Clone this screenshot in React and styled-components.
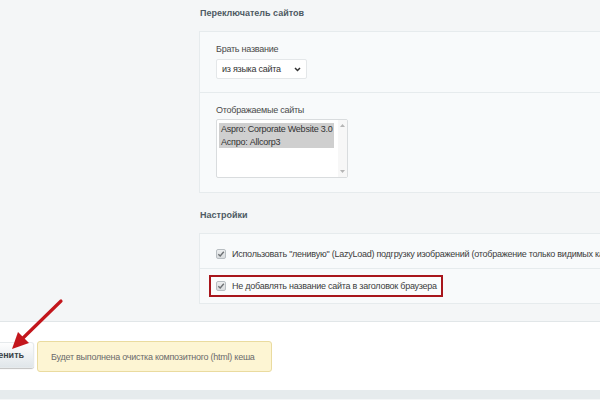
import styled, { createGlobalStyle } from 'styled-components';

const GlobalStyle = createGlobalStyle`
  html, body {
    margin: 0;
    padding: 0;
    overflow: hidden;
  }
  body {
    font-family: "Liberation Sans", Arial, sans-serif;
    font-size: 9px;
    letter-spacing: -0.25px;
    color: #333;
  }
`;

const Page = styled.div`
  position: relative;
  width: 600px;
  height: 400px;
  overflow: hidden;
  background: #f4f6f7;
`;

const Main = styled.div`
  height: 322px;
  padding-left: 199px;
  border-bottom: 1px solid #e1e6e8;
  box-sizing: border-box;
`;

const SectionTitle = styled.div`
  height: 26px;
  line-height: 26px;
  padding-left: 1px;
  margin-top: ${(p) => p.$top || 0}px;
  margin-bottom: 5px;
  font-weight: bold;
  font-size: 9px;
  letter-spacing: 0;
  color: #4e5a63;
`;

const Card = styled.div`
  width: 520px;
  background: #f8fafb;
  border: 1px solid #e6ebed;
  border-right: none;
`;

const Field = styled.div`
  padding: 11px 16px ${(p) => p.$bottom}px;
  border-bottom: ${(p) => (p.$last ? 'none' : '1px solid #e6ebed')};
`;

const Label = styled.div`
  height: 12px;
  line-height: 12px;
  margin-bottom: ${(p) => p.$gap}px;
  color: #4a4a4a;
`;

const Select = styled.div`
  display: flex;
  align-items: center;
  justify-content: space-between;
  width: 91px;
  height: 20px;
  box-sizing: border-box;
  padding: 0 5px 0 5px;
  background: #fff;
  border: 1px solid #e4e7e9;
  border-radius: 2px;
  color: #333;
`;

const ListBox = styled.div`
  display: flex;
  width: 132px;
  height: 59px;
  box-sizing: border-box;
  background: #fff;
  border: 1px solid #d9dcde;
  border-radius: 2px;
`;

const Options = styled.div`
  flex: 1;
  padding: 3px 4px 0 2px;
`;

const Option = styled.div`
  height: 12.5px;
  line-height: 12.5px;
  padding-left: 2px;
  background: ${(p) => (p.$selected ? '#cfcfcf' : 'transparent')};
  color: #333;
  white-space: nowrap;
`;

const ScrollBar = styled.div`
  width: 9px;
  display: flex;
  flex-direction: column;
  justify-content: space-between;
  align-items: center;
  padding: 4px 0;
  background: #f7f7f7;
`;

const Row = styled.div`
  display: flex;
  align-items: center;
  height: ${(p) => p.$h}px;
  box-sizing: border-box;
  padding: ${(p) => p.$pad};
  border-bottom: ${(p) => (p.$last ? 'none' : '1px solid #e6ebed')};
`;

const Highlight = styled.div`
  display: flex;
  align-items: center;
  height: 22px;
  box-sizing: border-box;
  padding: 0 4px 0 5px;
  border: 2px solid #a8161c;
  background: #fbfcfc;
`;

const CheckText = styled.span`
  margin-left: 6px;
  color: #3c3c3c;
  white-space: nowrap;
`;

const Box = styled.span`
  display: inline-flex;
  flex-shrink: 0;
  align-items: center;
  justify-content: center;
  width: 10px;
  height: 10px;
  box-sizing: border-box;
  border: 1px solid #b8bec2;
  border-radius: 2px;
  background: linear-gradient(#eceeef, #d9dcde);
`;

const Footer = styled.div`
  display: flex;
  align-items: flex-start;
  gap: 3px;
  height: 68px;
  box-sizing: border-box;
  padding-top: 19px;
  background: #fff;
`;

const SaveButton = styled.button`
  flex-shrink: 0;
  height: 26px;
  margin: 1px 0 0 -36px;
  padding: 0 10px 0 10px;
  border: none;
  border-radius: 3px;
  background: linear-gradient(#ffffff, #dfe5e9);
  box-shadow: 0 1px 1px rgba(0, 0, 0, 0.25), inset 0 0 0 1px #e6eaec;
  font-family: "Liberation Sans", Arial, sans-serif;
  font-size: 9px;
  font-weight: bold;
  color: #3b4348;
`;

const Notice = styled.div`
  display: flex;
  align-items: center;
  flex-shrink: 0;
  width: 235px;
  height: 31px;
  box-sizing: border-box;
  padding-left: 13px;
  background: #fdf5d3;
  border: 1px solid #eadb9f;
  border-radius: 3px;
  color: #6b6b6b;
  white-space: nowrap;
`;

const BottomStrip = styled.div`
  height: 9px;
  background: #e6ebed;
`;

const Overlay = styled.svg`
  position: absolute;
  left: 0;
  top: 0;
  pointer-events: none;
`;

function Check() {
  return (
    <Box>
      <svg width="8" height="8" viewBox="0 0 8 8">
        <polyline points="1.3,4.2 3.2,6 6.8,1.8" fill="none" stroke="#6d7174" strokeWidth="1.4" />
      </svg>
    </Box>
  );
}

function Arrow() {
  return (
    <Overlay width="600" height="400">
      <line x1="61" y1="301" x2="21" y2="340" stroke="#c3161c" strokeWidth="3.2" strokeLinecap="round" />
      <polygon points="12,349 29,343 18,332" fill="#c3161c" />
    </Overlay>
  );
}

export default function App() {
  return (
    <Page>
      <GlobalStyle />
      <Main>
        <SectionTitle>Переключатель сайтов</SectionTitle>
        <Card>
          <Field $bottom={13}>
            <Label $gap={4}>Брать название</Label>
            <Select>
              <span>из языка сайта</span>
              <svg width="7" height="5" viewBox="0 0 7 5">
                <polyline points="1,1 3.5,3.5 6,1" fill="none" stroke="#333" strokeWidth="1.5" />
              </svg>
            </Select>
          </Field>
          <Field $bottom={14} $last>
            <Label $gap={3}>Отображаемые сайты</Label>
            <ListBox>
              <Options>
                <Option $selected>Aspro: Corporate Website 3.0</Option>
                <Option $selected>Аспро: Allcorp3</Option>
              </Options>
              <ScrollBar>
                <svg width="5" height="3" viewBox="0 0 5 3">
                  <polygon points="0,3 2.5,0 5,3" fill="#b5b5b5" />
                </svg>
                <svg width="5" height="3" viewBox="0 0 5 3">
                  <polygon points="0,0 2.5,3 5,0" fill="#b5b5b5" />
                </svg>
              </ScrollBar>
            </ListBox>
          </Field>
        </Card>

        <SectionTitle $top={9}>Настройки</SectionTitle>
        <Card>
          <Row $h={35} $pad="5px 0 0 16px">
            <Check />
            <CheckText>
              Использовать "ленивую" (LazyLoad) подгрузку изображений (отображение только видимых картинок)
            </CheckText>
          </Row>
          <Row $h={34} $pad="0 0 0 9px" $last>
            <Highlight>
              <Check />
              <CheckText>Не добавлять название сайта в заголовок браузера</CheckText>
            </Highlight>
          </Row>
        </Card>
      </Main>

      <Footer>
        <SaveButton>Применить</SaveButton>
        <Notice>Будет выполнена очистка композитного (html) кеша</Notice>
      </Footer>
      <BottomStrip />
      <Arrow />
    </Page>
  );
}
